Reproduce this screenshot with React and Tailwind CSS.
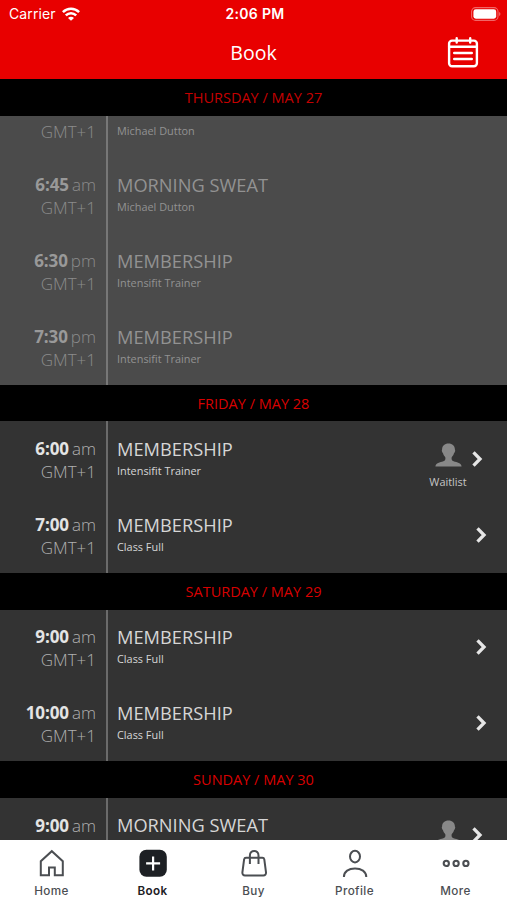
import React from "react";

const schedule = [
	{
		day: "THURSDAY / MAY 27",
		past: true,
		classes: [
			{ time: "6:00", period: "am", title: "MORNING SWEAT", info: "Michael Dutton" },
			{ time: "6:45", period: "am", title: "MORNING SWEAT", info: "Michael Dutton" },
			{ time: "6:30", period: "pm", title: "MEMBERSHIP", info: "Intensifit Trainer" },
			{ time: "7:30", period: "pm", title: "MEMBERSHIP", info: "Intensifit Trainer" },
		],
	},
	{
		day: "FRIDAY / MAY 28",
		classes: [
			{ time: "6:00", period: "am", title: "MEMBERSHIP", info: "Intensifit Trainer", waitlist: true },
			{ time: "7:00", period: "am", title: "MEMBERSHIP", info: "Class Full" },
		],
	},
	{
		day: "SATURDAY / MAY 29",
		classes: [
			{ time: "9:00", period: "am", title: "MEMBERSHIP", info: "Class Full" },
			{ time: "10:00", period: "am", title: "MEMBERSHIP", info: "Class Full" },
		],
	},
	{
		day: "SUNDAY / MAY 30",
		classes: [
			{ time: "9:00", period: "am", title: "MORNING SWEAT", info: "Michael Dutton", waitlist: true },
		],
	},
];

const WifiIcon = () => (
	<svg className="w-[18px] h-[14px]" viewBox="0 0 18 14" fill="none" stroke="#fff" strokeWidth="2.5">
		<path d="M0.9 5.1C5.5 0.6 12.5 0.6 17.1 5.1" />
		<path d="M3.8 8.4C6.8 5.5 11.2 5.5 14.2 8.4" />
		<path d="M9 13.8L6 10.9C7.7 9.2 10.3 9.2 12 10.9Z" fill="#fff" stroke="none" />
	</svg>
);

const BatteryIcon = () => (
	<svg className="w-[30px] h-[14px]" viewBox="0 0 30 14" fill="none">
		<rect x="0.6" y="0.6" width="26.4" height="12.8" rx="4" stroke="#fff" strokeOpacity="0.4" strokeWidth="1.1" />
		<rect x="2.4" y="2.3" width="22.8" height="9.4" rx="2.4" fill="#fff" />
		<path d="M28.2 5V9C29.8 8.4 29.8 5.6 28.2 5Z" fill="#fff" fillOpacity="0.45" />
	</svg>
);

const CalendarIcon = () => (
	<svg
		className="w-[32px] h-[32px]"
		viewBox="0 0 32 32"
		fill="none"
		stroke="#fff"
		strokeWidth="2.4"
		strokeLinecap="round"
	>
		<rect x="2.1" y="3.6" width="27.8" height="25.6" rx="3" />
		<path d="M2.1 9.8H29.9M7.2 16H24.8M7.2 22H24.8M9.7 1.2V5.6M23.2 1.2V5.6" />
	</svg>
);

const PersonIcon = () => (
	<svg className="w-[27px] h-[24px]" viewBox="0 0 27 24" fill="#888">
		<path d="M13.5 0.5C9.6 0.5 7.1 3 7.1 6.5C6.7 7 6.7 7.8 7 8.6C7.2 9.5 7.6 9.9 8 10.3C8.5 12 9.3 13.2 10.3 14.2C10.7 16.3 10.2 17.6 8.4 18.2C4.8 19.4 0.8 19.6 0.4 23.6H26.6C26.2 19.6 22.2 19.4 18.6 18.2C16.8 17.6 16.3 16.3 16.7 14.2C17.7 13.2 18.5 12 19 10.3C19.4 9.9 19.8 9.5 20 8.6C20.3 7.8 20.3 7 19.9 6.5C19.9 3 17.4 0.5 13.5 0.5Z" />
	</svg>
);

const Chevron = () => (
	<svg className="w-[11px] h-[16px]" viewBox="0 0 11 16" fill="none" stroke="#e6e6e6" strokeWidth="3.3">
		<path d="M1.5 1.4L8 8L1.5 14.6" />
	</svg>
);

const HomeIcon = () => (
	<svg className="w-[28px] h-[28px]" viewBox="0 0 28 28" fill="none" stroke="#4b4e52" strokeWidth="2">
		<path d="M2.8 26.2V12.2L13.8 2.2L24.8 12.2V26.2H16.8V18.4H11V26.2Z" />
	</svg>
);

const BookIcon = () => (
	<svg className="w-[28px] h-[28px]" viewBox="0 0 28 28">
		<rect x="0.4" y="0.8" width="27.4" height="27" rx="7" fill="#1d2024" />
		<path d="M14.1 7.4V21.4M7.1 14.4H21.1" stroke="#fff" strokeWidth="2.2" />
	</svg>
);

const BuyIcon = () => (
	<svg className="w-[28px] h-[28px]" viewBox="0 0 28 28" fill="none" stroke="#4b4e52" strokeWidth="2">
		<path d="M6 8.8H22.4C23.6 8.8 24.1 9.4 24.3 10.4L26 23.4C26.2 25.2 25.2 26.4 23.4 26.4H5C3.2 26.4 2.2 25.2 2.4 23.4L4.1 10.4C4.3 9.4 4.8 8.8 6 8.8Z" />
		<path d="M9.9 15V6.4C9.9 0.4 18.5 0.4 18.5 6.4V15" />
	</svg>
);

const ProfileIcon = () => (
	<svg className="w-[28px] h-[28px]" viewBox="0 0 28 28" fill="none" stroke="#4b4e52" strokeWidth="2">
		<ellipse cx="14" cy="7.6" rx="5" ry="5.8" />
		<path d="M2.9 28C2.9 22.4 7.8 19.4 14 19.4C20.2 19.4 25.3 22.4 25.3 28" />
	</svg>
);

const MoreIcon = () => (
	<svg className="w-[28px] h-[28px]" viewBox="0 0 28 28" fill="none" stroke="#4b4e52" strokeWidth="2.1">
		<circle cx="4.3" cy="14.4" r="2.6" />
		<circle cx="14.1" cy="14.4" r="2.6" />
		<circle cx="23.9" cy="14.4" r="2.6" />
	</svg>
);

const tabs = [
	{ label: "Home", Icon: HomeIcon },
	{ label: "Book", Icon: BookIcon, active: true },
	{ label: "Buy", Icon: BuyIcon },
	{ label: "Profile", Icon: ProfileIcon },
	{ label: "More", Icon: MoreIcon },
];

const ClassRow = ({ item, past }) => (
	<div className="flex h-[75.8px] shrink-0">
		<div
			className={`w-[108px] shrink-0 border-r-2 pr-[10px] pt-[15.9px] text-right text-[17px] leading-[23px] ${
				past ? "border-[#777] text-[#8c8c8c]" : "border-[#6b6b6b] text-[#b0b0b0]"
			}`}
		>
			<p className="flex justify-end gap-[3px] font-light">
				<span className={`font-bold tracking-[-0.1px] ${past ? "text-[#999]" : "text-[#e4e4e4]"}`}>
					{item.time}
				</span>
				{item.period}
			</p>
			<p className="font-light">GMT+1</p>
		</div>
		<div className={`flex-1 pl-[9px] pt-[15.6px] ${past ? "text-[#929292]" : "text-[#d6d6d6]"}`}>
			<h3 className="text-[18.25px] leading-[23px]">{item.title}</h3>
			<p className="text-[10.9px] leading-[22px]">{item.info}</p>
		</div>
		{!past && (
			<div className={`flex ${item.waitlist ? "pr-[24px]" : "pr-[20.5px]"}`}>
				{item.waitlist && (
					<div className="flex w-[50px] flex-col items-center pt-[22px] mr-[-1px]">
						<PersonIcon />
						<span className="mt-[7px] text-[10.9px] leading-[16px] text-[#c6c6c6]">Waitlist</span>
					</div>
				)}
				<div className="pt-[29.5px]">
					<Chevron />
				</div>
			</div>
		)}
	</div>
);

const App = () => {
	return (
		<div className="flex h-[900px] w-[507px] flex-col overflow-hidden bg-black font-['Open_Sans',sans-serif]">
			<header className="h-[79px] shrink-0 bg-[#e80000] text-white">
				<div className="grid h-[27px] grid-cols-3 items-center pl-[9px] pr-[6px] font-['Inter',sans-serif] text-[14px]">
					<div className="flex items-center gap-[6px]">
						<span className="tracking-[0.1px]">Carrier</span>
						<WifiIcon />
					</div>
					<span className="text-center font-semibold tracking-[0.3px]">2:06 PM</span>
					<div className="flex justify-end">
						<BatteryIcon />
					</div>
				</div>
				<div className="grid h-[52px] grid-cols-3 items-center pr-[28px] pl-[28px]">
					<h1 className="col-start-2 text-center text-[19.5px]">Book</h1>
					<div className="flex justify-end">
						<CalendarIcon />
					</div>
				</div>
			</header>

			<main className="flex min-h-0 flex-1 flex-col overflow-hidden">
				{schedule.map((section) => (
					<section key={section.day} className="shrink-0">
						<h2
							className={`flex h-[36.6px] items-center justify-center bg-black pt-[0.6px] text-[14.5px] ${
								section.past ? "text-[#c40000]" : "text-[#d80000]"
							}`}
						>
							{section.day}
						</h2>
						{/* the list is scrolled, so past classes stick to the bottom of their block */}
						<div
							className={`flex flex-col justify-end overflow-hidden ${
								section.past ? "h-[269.2px] bg-[#4b4b4b]" : "bg-[#333]"
							}`}
						>
							{section.classes.map((item, index) => (
								<ClassRow key={index} item={item} past={section.past} />
							))}
						</div>
					</section>
				))}
			</main>

			<nav className="grid h-[60px] shrink-0 grid-cols-5 bg-white px-px font-['Inter',sans-serif]">
				{tabs.map(({ label, Icon, active }) => (
					<div key={label} className="flex flex-col items-center pt-[9px]">
						<Icon />
						<span
							className={`mt-[6px] text-[11.7px] leading-[16px] tracking-[0.4px] ${
								active ? "font-semibold text-[#1d2024]" : "font-medium text-[#4b4e52]"
							}`}
						>
							{label}
						</span>
					</div>
				))}
			</nav>
		</div>
	);
};

export default App;
